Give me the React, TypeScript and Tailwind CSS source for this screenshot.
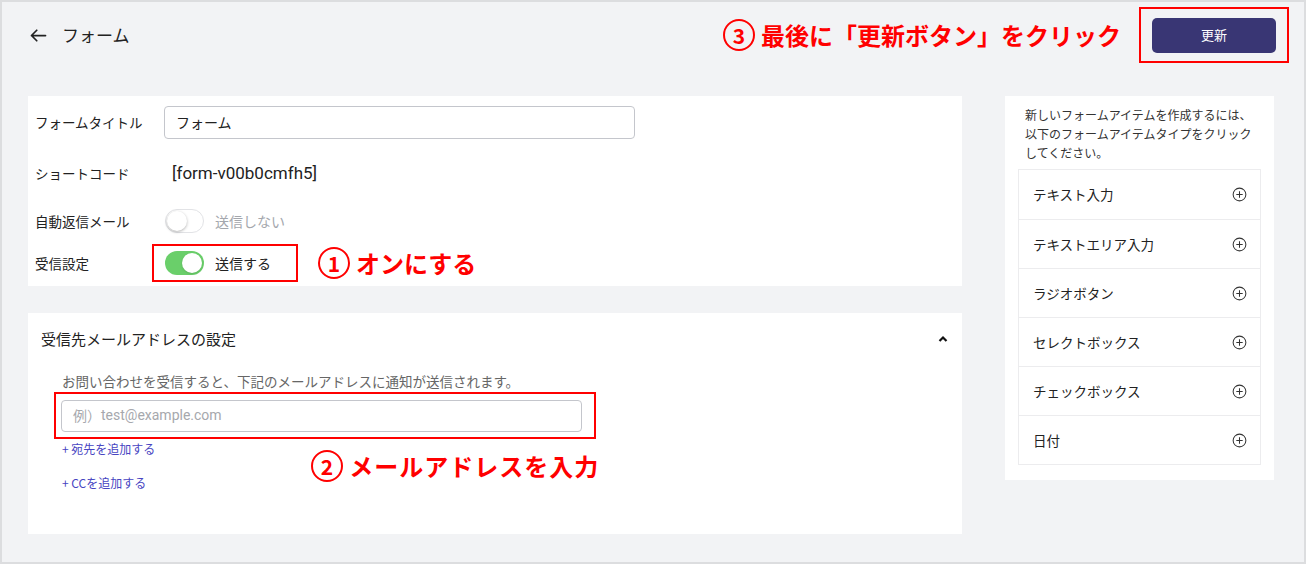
import React from 'react';

const jp = { fontFamily: '"Noto Sans CJK JP", "Noto Sans", sans-serif' };

const Num: React.FC<{ n: string }> = ({ n }) => (
  <span className="inline-flex items-center justify-center w-[32px] h-[32px] rounded-full border-[2.5px] border-[#f00] text-[21px] font-bold leading-none text-[#f00] mr-[6px]">
    {n}
  </span>
);

const Toggle: React.FC<{ on: boolean }> = ({ on }) => (
  <span
    className={
      on
        ? 'relative inline-block w-[39px] h-[24px] rounded-full bg-[#6acf6a]'
        : 'relative inline-block w-[39px] h-[24px] rounded-full bg-white border border-[#e2e3e6]'
    }
  >
    <span
      className={
        on
          ? 'absolute top-[2px] right-[2px] w-[20px] h-[20px] rounded-full bg-white shadow'
          : 'absolute top-[1px] left-[1px] w-[20px] h-[20px] rounded-full bg-white shadow-[0_1px_3px_rgba(0,0,0,0.3)]'
      }
    />
  </span>
);

const PlusCircle = () => (
  <svg width="15" height="15" viewBox="0 0 16 16" fill="none" stroke="#333" strokeWidth="1.1">
    <circle cx="8" cy="8" r="6.8" />
    <path d="M8 4.6v6.8M4.6 8h6.8" />
  </svg>
);

const items = ['テキスト入力', 'テキストエリア入力', 'ラジオボタン', 'セレクトボックス', 'チェックボックス', '日付'];

export default function App() {
  return (
    <div style={jp} className="w-[1306px] h-[564px] bg-[#f2f3f5] border-2 border-[#dcdddf] text-[#222] flex flex-col overflow-hidden">
      {/* header */}
      <div className="flex items-center h-[70px] pl-[26px] pr-[15px] pb-[4px]">
        <svg width="21" height="21" viewBox="0 0 24 24" fill="none" stroke="#222" strokeWidth="2" strokeLinecap="round" strokeLinejoin="round">
          <path d="M20 12H4M10 18l-6-6 6-6" />
        </svg>
        <span className="ml-[13px] text-[17px]">フォーム</span>
        <div className="ml-auto flex items-center">
          <span className="flex items-center text-[24px] font-bold text-[#f00]">
            <Num n="3" />
            最後に「更新ボタン」をクリック
          </span>
          <div className="ml-[18px] border-2 border-[#f00] w-[150px] h-[56px] flex items-center justify-center">
            <button className="w-[124px] h-[35px] rounded-[5px] bg-[#393674] text-white text-[13px]">更新</button>
          </div>
        </div>
      </div>

      <div className="flex pl-[26px] pt-[24px]">
        {/* left column */}
        <div className="w-[934px] flex flex-col gap-[27px]">
          <div className="bg-white h-[190px] pl-[7px] pt-[10px]">
            <div className="flex items-center h-[33px]">
              <span className="w-[129px] text-[13.5px]">フォームタイトル</span>
              <div className="w-[471px] h-[33px] border border-[#c4c6cc] rounded-[4px] flex items-center px-[11px] text-[14px]">フォーム</div>
            </div>
            <div className="flex items-center h-[35px] mt-[17px]">
              <span className="w-[137px] text-[13.5px]">ショートコード</span>
              <span className="text-[17px]" style={{ fontFamily: 'Roboto, "Noto Sans CJK JP", sans-serif' }}>[form-v00b0cmfh5]</span>
            </div>
            <div className="flex items-center h-[24px] mt-[18px]">
              <span className="w-[130px] text-[13.5px]">自動返信メール</span>
              <Toggle on={false} />
              <span className="ml-[11px] text-[14px] text-[#a4a7ad]">送信しない</span>
            </div>
            <div className="flex items-center h-[38px] mt-[11px]">
              <span className="w-[117px] text-[13.5px]">受信設定</span>
              <div className="w-[146px] h-[38px] border-2 border-[#f00] flex items-center pl-[11px]">
                <Toggle on={true} />
                <span className="ml-[11px] text-[14px]">送信する</span>
              </div>
              <span className="ml-[20px] flex items-center text-[24px] font-bold text-[#f00]">
                <Num n="1" />
                オンにする
              </span>
            </div>
          </div>

          <div className="bg-white h-[221px] pl-[13px] pr-[14px] pt-[14px]">
            <div className="flex items-center justify-between h-[24px]">
              <span className="text-[15px]">受信先メールアドレスの設定</span>
              <svg width="10" height="8" viewBox="0 0 10 8" fill="none" stroke="#111" strokeWidth="2.2">
                <path d="M1.5 6L5 2.5 8.5 6" />
              </svg>
            </div>
            <div className="pl-[21px] mt-[21px] text-[13.5px] text-[#666] h-[18px] leading-[18px]">お問い合わせを受信すると、下記のメールアドレスに通知が送信されます。</div>
            <div className="ml-[13px] mt-[2px] w-[542px] h-[47px] border-2 border-[#f00] flex items-center pl-[5px]">
              <div className="w-[521px] h-[32px] border border-[#c4c6cc] rounded-[4px] flex items-center px-[11px] text-[14px] text-[#a6a8ad]">
                例）<span style={{ fontFamily: 'Roboto, sans-serif' }}>test@example.com</span>
              </div>
            </div>
            <div className="flex">
              <div className="pl-[21px] flex flex-col text-[12px] text-[#4845c2]">
                <span className="mt-[1px] h-[18px]">+ 宛先を追加する</span>
                <span className="mt-[16px] h-[18px]">+ CCを追加する</span>
              </div>
              <span className="ml-[156px] mt-[11px] flex items-center text-[24px] font-bold text-[#f00] h-[32px] tracking-[1px]">
                <Num n="2" />
                メールアドレスを入力
              </span>
            </div>
          </div>
        </div>

        {/* right column */}
        <div className="ml-[43px] w-[269px] h-[384px] bg-white px-[13px] pt-[9px]">
          <p className="px-[7px] text-[12px] leading-[19px] text-[#333]">
            新しいフォームアイテムを作成するには、以下のフォームアイテムタイプをクリックしてください。
          </p>
          <div className="mt-[7px] border border-[#ececee]">
            {items.map((it, i) => (
              <div
                key={it}
                className={
                  i === 0
                    ? 'flex items-center justify-between h-[49px] pl-[14px] pr-[13px]'
                    : 'flex items-center justify-between h-[49px] pl-[14px] pr-[13px] border-t border-[#ececee]'
                }
              >
                <span className="text-[13.5px]">{it}</span>
                <PlusCircle />
              </div>
            ))}
          </div>
        </div>
      </div>
    </div>
  );
}
